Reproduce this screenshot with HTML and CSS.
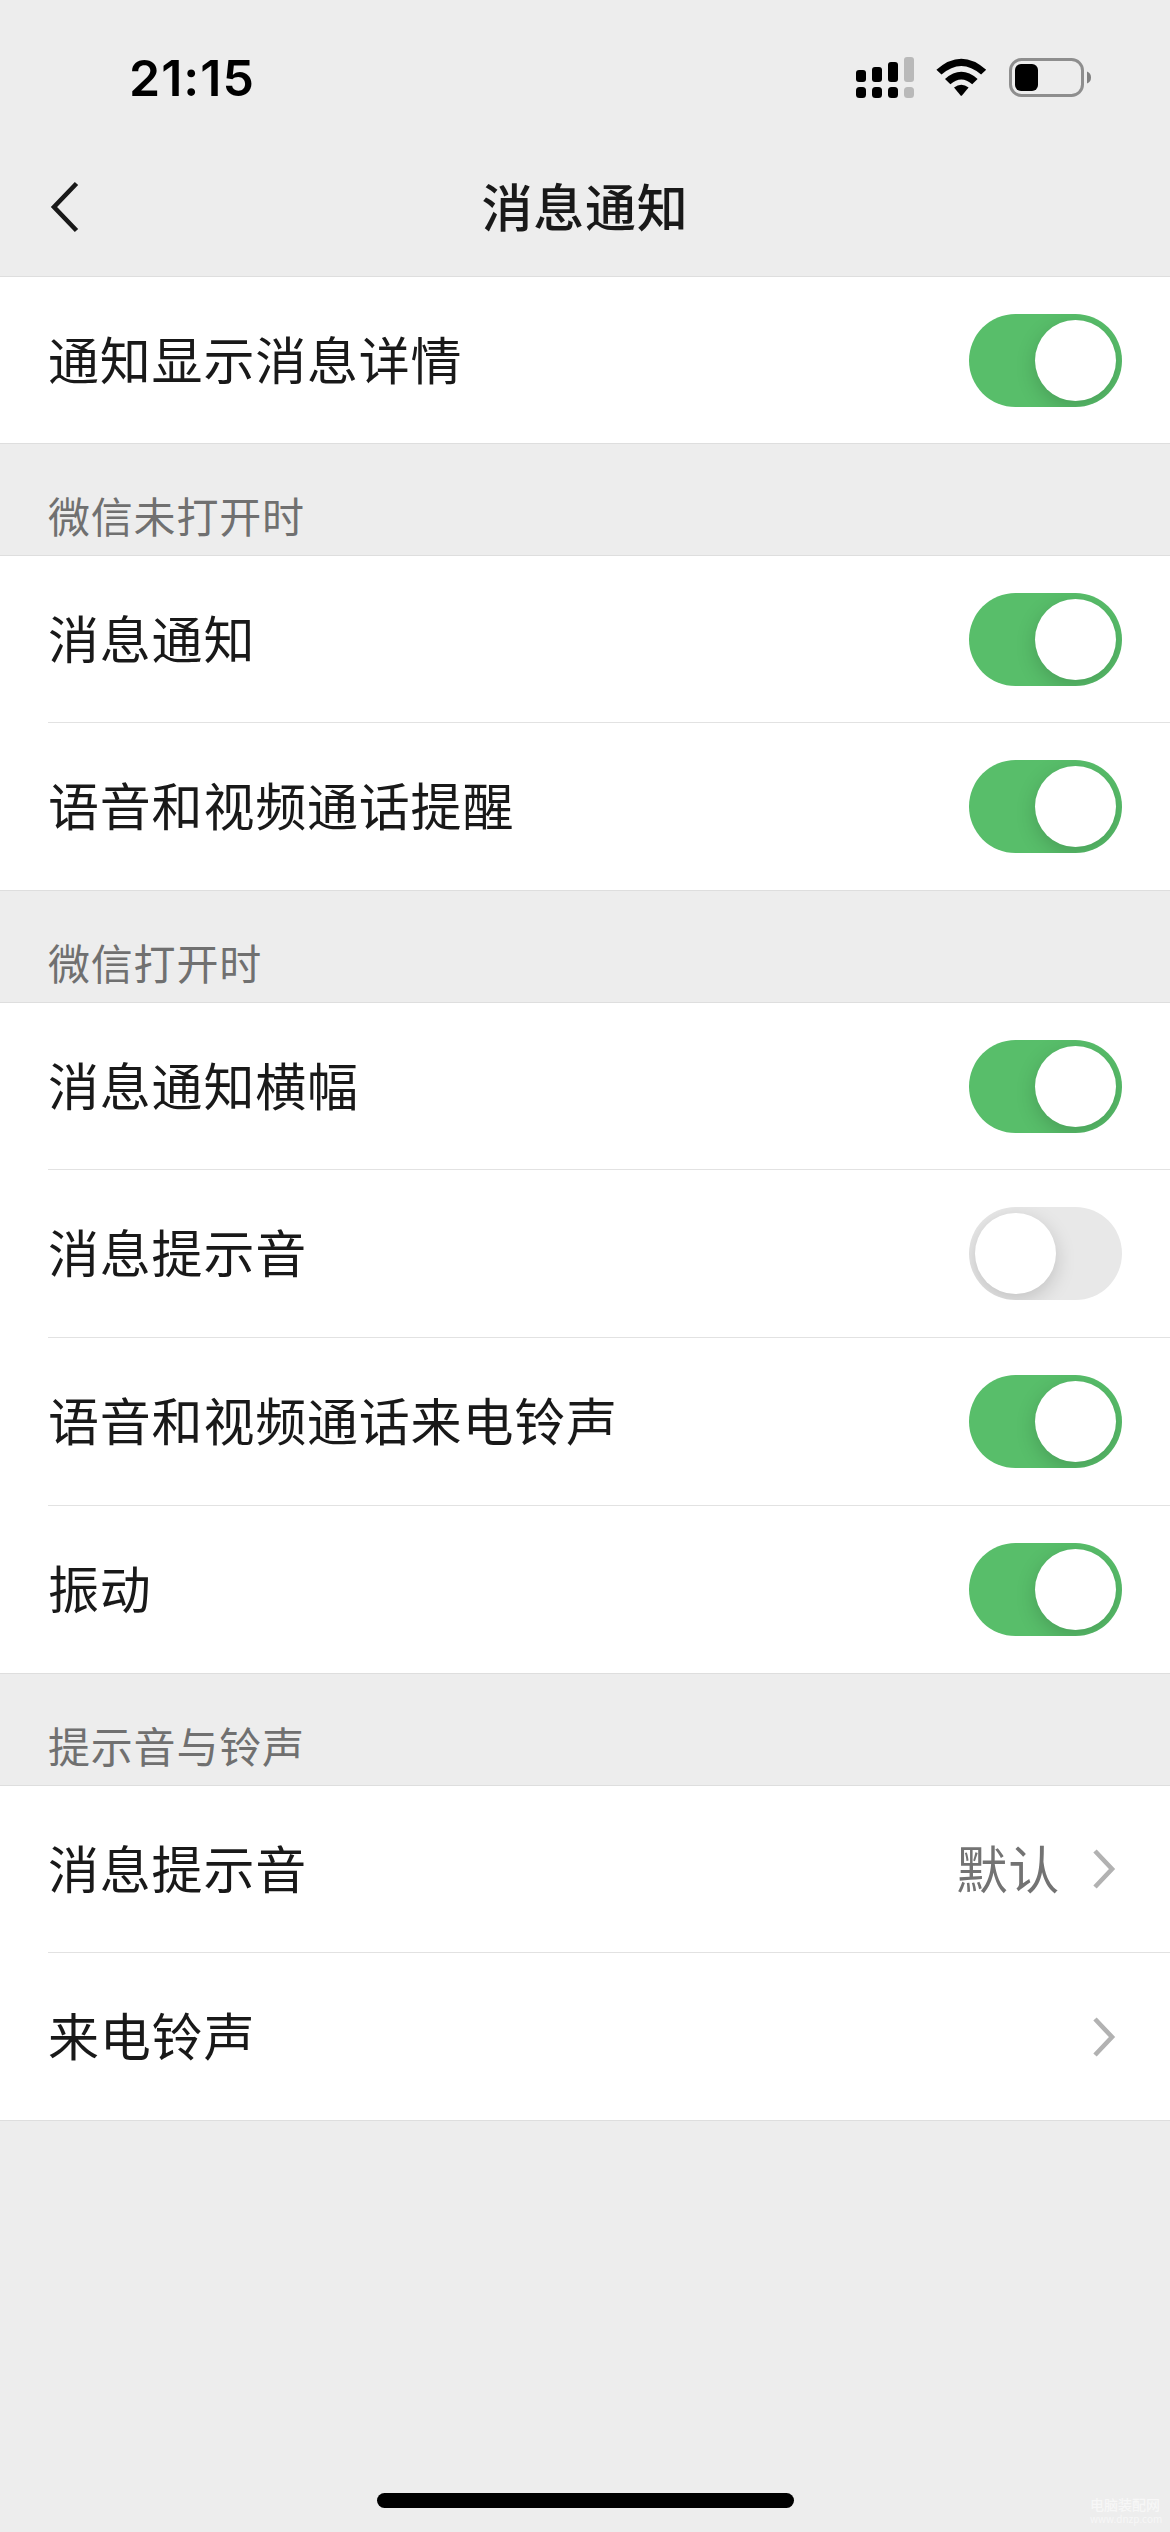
FILE: index.html
```html
<!DOCTYPE html>
<html lang="zh-CN">
<head>
<meta charset="utf-8">
<title>消息通知</title>
<link rel="stylesheet" href="styles.css">
</head>
<body>
<div class="screen">
  <header class="top">
    <div class="status">
      <span class="time">21:15</span>
      <svg class="status-icons" width="240" height="44" viewBox="0 0 240 44">
        <g>
          <rect x="0" y="14" width="10" height="12" rx="3"/>
          <rect x="16" y="11" width="10" height="15" rx="3"/>
          <rect x="32" y="6" width="10" height="20" rx="3"/>
          <rect x="48" y="1" width="10" height="25" rx="3" fill="#b9b9b9"/>
          <rect x="0" y="31" width="10" height="11" rx="3.5"/>
          <rect x="16" y="31" width="10" height="11" rx="3.5"/>
          <rect x="32" y="31" width="10" height="11" rx="3.5"/>
          <rect x="48" y="31" width="10" height="11" rx="3.5" fill="#b9b9b9"/>
        </g>
        <g>
          <path d="M80.4 13.8 L85.5 18.6 Q105.3 1.4 125.1 18.6 L130.2 13.8 Q105.3 -8.4 80.4 13.8 Z"/>
          <path d="M89 22.9 L94.4 28.2 Q105.3 18.6 116.2 28.2 L121.6 22.9 Q105.3 8.6 89 22.9 Z"/>
          <path d="M98 31.6 Q105.3 25.8 112.6 31.6 L106.2 39.2 Q105.3 40.2 104.4 39.2 Z"/>
        </g>
        <rect x="154.5" y="3.5" width="72" height="36" rx="11" fill="none" stroke="#8e8e8e" stroke-width="3"/>
        <rect x="159" y="8" width="23" height="27" rx="6"/>
        <path d="M231 15.5 Q235 17 235 21.5 Q235 26 231 27.5 Z" fill="#808080"/>
      </svg>
    </div>
    <nav class="nav">
      <svg class="back" width="30" height="54" viewBox="0 0 30 54"><path d="M26.5 3.5 L4 27 L26.5 50.5" fill="none" stroke="#191919" stroke-width="4.6"/></svg>
      <h1>消息通知</h1>
    </nav>
  </header>

  <main>
    <section class="group">
      <div class="row"><span>通知显示消息详情</span><i class="switch on"></i></div>
    </section>
    <h2>微信未打开时</h2>
    <section class="group">
      <div class="row"><span>消息通知</span><i class="switch on"></i></div>
      <div class="row"><span>语音和视频通话提醒</span><i class="switch on"></i></div>
    </section>
    <h2>微信打开时</h2>
    <section class="group">
      <div class="row"><span>消息通知横幅</span><i class="switch on"></i></div>
      <div class="row"><span>消息提示音</span><i class="switch"></i></div>
      <div class="row"><span>语音和视频通话来电铃声</span><i class="switch on"></i></div>
      <div class="row"><span>振动</span><i class="switch on"></i></div>
    </section>
    <h2>提示音与铃声</h2>
    <section class="group">
      <div class="row"><span>消息提示音</span><span class="value">默认</span><svg class="chevron" width="24" height="42" viewBox="0 0 24 42"><path d="M3 3 L20 21 L3 39" fill="none" stroke="#b2b2b2" stroke-width="4.6"/></svg></div>
      <div class="row"><span>来电铃声</span><svg class="chevron" width="24" height="42" viewBox="0 0 24 42"><path d="M3 3 L20 21 L3 39" fill="none" stroke="#b2b2b2" stroke-width="4.6"/></svg></div>
    </section>
  </main>

  <footer class="bottom">
    <div class="home"></div>
    <div class="mark"><b>电脑装配网</b><small>www.dnzp.com</small></div>
  </footer>
</div>
</body>
</html>
```
FILE: styles.css
```css
* { box-sizing: border-box; }
body {
  margin: 0;
  background: #ededed;
  color: #191919;
  font-family: "Noto Sans CJK SC", sans-serif;
}
.screen {
  width: 1170px;
  height: 2532px;
  display: flex;
  flex-direction: column;
  position: relative;
  overflow: hidden;
}
.top { height: 276px; flex: none; }
.status {
  height: 150px;
  display: flex;
  justify-content: space-between;
  align-items: flex-start;
  padding: 48px 74px 0 129px;
}
.time {
  font: 600 50px/60px Inter, sans-serif;
  letter-spacing: 1px;
  color: #000;
}
.status-icons { display: block; margin-top: 8px; }
.nav {
  height: 114px;
  display: grid;
  grid-template-columns: 120px 1fr 120px;
  align-items: center;
}
.back { margin-left: 50px; }
h1 {
  margin: 0;
  padding-bottom: 4px;
  font-size: 51px;
  line-height: 74px;
  font-weight: 500;
  letter-spacing: 0.7px;
  text-align: center;
}
.group {
  background: #fff;
  border-top: 1px solid #dedede;
  border-bottom: 1px solid #dedede;
}
.row {
  height: 168px;
  margin-left: 48px;
  padding-right: 48px;
  display: flex;
  align-items: center;
  font-size: 51px;
  line-height: 74px;
  letter-spacing: 0.8px;
  border-top: 1px solid #e2e2e2;
}
.row:first-child { height: 166px; border-top: 0; }
.row > span { padding-bottom: 5px; }
.row > span:first-child { margin-right: auto; }
h2 {
  margin: 0;
  height: 111px;
  padding: 40px 48px 0;
  font-size: 42px;
  line-height: 62px;
  font-weight: 400;
  letter-spacing: 0.8px;
  color: #707070;
}
.switch {
  width: 153px;
  height: 93px;
  flex: none;
  padding: 6px;
  border-radius: 47px;
  background: #e8e8e8;
  overflow: hidden;
}
.switch::before {
  content: "";
  display: block;
  width: 81px;
  height: 81px;
  border-radius: 50%;
  background: #fff;
  box-shadow: 0 6px 20px rgba(0, 0, 0, 0.17);
}
.switch.on { background: #58be6a; }
.switch.on::before { margin-left: 60px; }
.value { color: #737373; margin-right: 32px; }
.chevron { margin-right: 6px; }
.bottom {
  margin-top: auto;
  height: 39px;
  display: flex;
  justify-content: center;
}
.home {
  width: 417px;
  height: 15px;
  border-radius: 8px;
  background: #000;
}
.mark {
  position: absolute;
  right: 10px;
  bottom: 7px;
  width: 70px;
  color: #f7f7f7;
  text-align: center;
}
.mark b { display: block; font-size: 14px; line-height: 16px; font-weight: 500; }
.mark small { display: block; font-size: 10px; line-height: 13px; }
```
